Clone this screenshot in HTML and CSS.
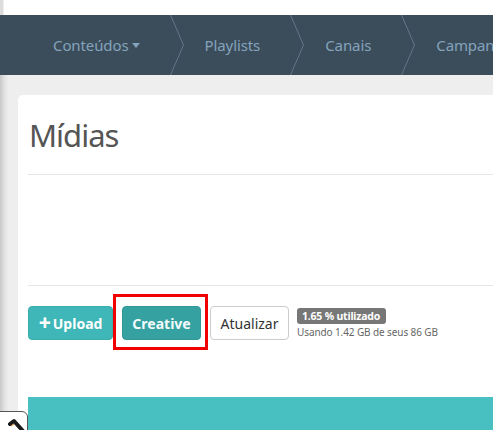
FILE: index.html
```html
<!DOCTYPE html>
<html lang="pt-BR">
<head>
<meta charset="utf-8">
<title>Mídias</title>
<link rel="stylesheet" href="styles.css">
</head>
<body>
<div class="topstrip"></div>
<nav class="crumbs">
  <a class="crumb">Conteúdos<span class="caret"></span></a>
  <svg class="sep" width="14" height="60" viewBox="0 0 14 60"><polyline points="0.5,0 13.5,30 0.5,60" fill="none" stroke="#62778a" stroke-width="1"/></svg>
  <a class="crumb">Playlists</a>
  <svg class="sep" width="14" height="60" viewBox="0 0 14 60"><polyline points="0.5,0 13.5,30 0.5,60" fill="none" stroke="#62778a" stroke-width="1"/></svg>
  <a class="crumb">Canais</a>
  <svg class="sep" width="14" height="60" viewBox="0 0 14 60"><polyline points="0.5,0 13.5,30 0.5,60" fill="none" stroke="#62778a" stroke-width="1"/></svg>
  <a class="crumb">Campanhas</a>
</nav>
<div class="layout">
  <div class="edge"></div>
  <main class="content">
    <section class="card">
      <h1 class="title">Mídias</h1>
      <div class="rule"></div>
      <div class="filters"></div>
      <div class="rule"></div>
      <div class="toolbar">
        <button class="btn btn-teal"><span class="plus">+</span>Upload</button>
        <span class="marked"><button class="btn btn-teal-dark">Creative</button></span>
        <button class="btn btn-white">Atualizar</button>
        <div class="usage">
          <span class="badge">1.65 % utilizado</span>
          <span class="usage-text">Usando 1.42 GB de seus 86 GB</span>
        </div>
      </div>
      <div class="listing"></div>
    </section>
  </main>
</div>
<div class="corner-widget">
  <svg width="28" height="20" viewBox="0 0 28 20"><path d="M9 12 L13 9 L22 19" fill="none" stroke="#1a1a1a" stroke-width="4" stroke-linecap="round" stroke-linejoin="round"/><path d="M10 14 L13 12" stroke="#e08a20" stroke-width="1"/></svg>
</div>
</body>
</html>
```
FILE: styles.css
```css
* { box-sizing: border-box; }

html, body {
  margin: 0;
  height: 100%;
}

body {
  font-family: "Noto Sans", "Open Sans", sans-serif;
  background: #eeeeee;
  overflow: hidden;
  position: relative;
  color: #333;
}

.topstrip {
  height: 15px;
  background: linear-gradient(to right, #dcdcdc 0, #dcdcdc 3px, #ffffff 4px);
}

.crumbs {
  height: 60px;
  background: #3b4d5b;
  display: flex;
  align-items: center;
  padding-left: 53px;
  white-space: nowrap;
}

.crumb {
  color: #84a3bc;
  font-size: 15px;
  margin-right: 30px;
  display: flex;
  align-items: center;
  letter-spacing: -0.1px;
}

.sep {
  flex: none;
  margin-right: 21px;
}

.caret {
  display: inline-block;
  width: 0;
  height: 0;
  margin-left: 3px;
  border-left: 4px solid transparent;
  border-right: 4px solid transparent;
  border-top: 5px solid #84a3bc;
}

.layout {
  display: flex;
  height: calc(100% - 75px);
}

.edge {
  width: 8px;
  flex: none;
  background: linear-gradient(to right, #c9c9c9 0, #d4d4d4 2px, #e4e4e4 5px, #ececec 8px);
}

.content {
  flex: 1;
  padding: 20px 0 0 10px;
}

.card {
  background: #ffffff;
  border-radius: 5px 0 0 0;
  height: 100%;
  padding-left: 10px;
  display: flex;
  flex-direction: column;
}

.title {
  margin: 22px 0 0 1px;
  font-size: 31px;
  line-height: 36px;
  font-weight: 400;
  color: #555555;
  letter-spacing: -1px;
}

.rule {
  height: 1px;
  background: #e6e6e6;
  flex: none;
}

.title + .rule { margin-top: 21px; }

.filters { height: 110px; flex: none; }

.toolbar {
  margin-top: 20px;
  display: flex;
  align-items: flex-start;
  gap: 9px;
}

.btn {
  height: 34px;
  border-radius: 4px;
  font-family: inherit;
  font-size: 14px;
  padding: 0 12px;
  border: 1px solid transparent;
  display: flex;
  align-items: center;
}

.btn-teal {
  background: #3fb6b7;
  border-color: #3aaeae;
  color: #ffffff;
  font-weight: 700;
  width: 85px;
  justify-content: center;
}

.plus {
  font-size: 21px;
  font-weight: 800;
  margin-right: 2px;
  line-height: 1;
  position: relative;
  top: -1px;
}

.marked {
  position: relative;
  display: flex;
}

.marked::after {
  content: "";
  position: absolute;
  left: -9px;
  right: -7px;
  top: -12px;
  bottom: -10px;
  border: 3px solid #f20000;
}

.btn-teal-dark {
  background: #36a1a1;
  border-color: #329898;
  color: #f2fbfb;
  font-weight: 700;
  width: 79px;
  justify-content: center;
}

.btn-white {
  background: #ffffff;
  border-color: #cccccc;
  color: #333333;
  width: 79px;
  justify-content: center;
}

.usage {
  margin-left: -1px;
  padding-top: 2px;
  display: flex;
  flex-direction: column;
  align-items: flex-start;
}

.badge {
  background: #777777;
  color: #ffffff;
  font-size: 10.5px;
  font-weight: 700;
  line-height: 16px;
  padding: 0 6px 0 5px;
  border-radius: 3px;
  letter-spacing: -0.2px;
}

.usage-text {
  font-size: 10px;
  color: #666666;
  line-height: 15px;
  margin-top: 1px;
  letter-spacing: -0.1px;
}

.listing {
  margin-top: 57px;
  flex: 1;
  background: #48c0c1;
}

.corner-widget {
  position: absolute;
  left: -6px;
  top: 411px;
  width: 34px;
  height: 30px;
  background: #ffffff;
  border: 1px solid #555;
  border-radius: 0 6px 0 0;
  padding-left: 6px;
}

.corner-widget svg { display: block; }
```
